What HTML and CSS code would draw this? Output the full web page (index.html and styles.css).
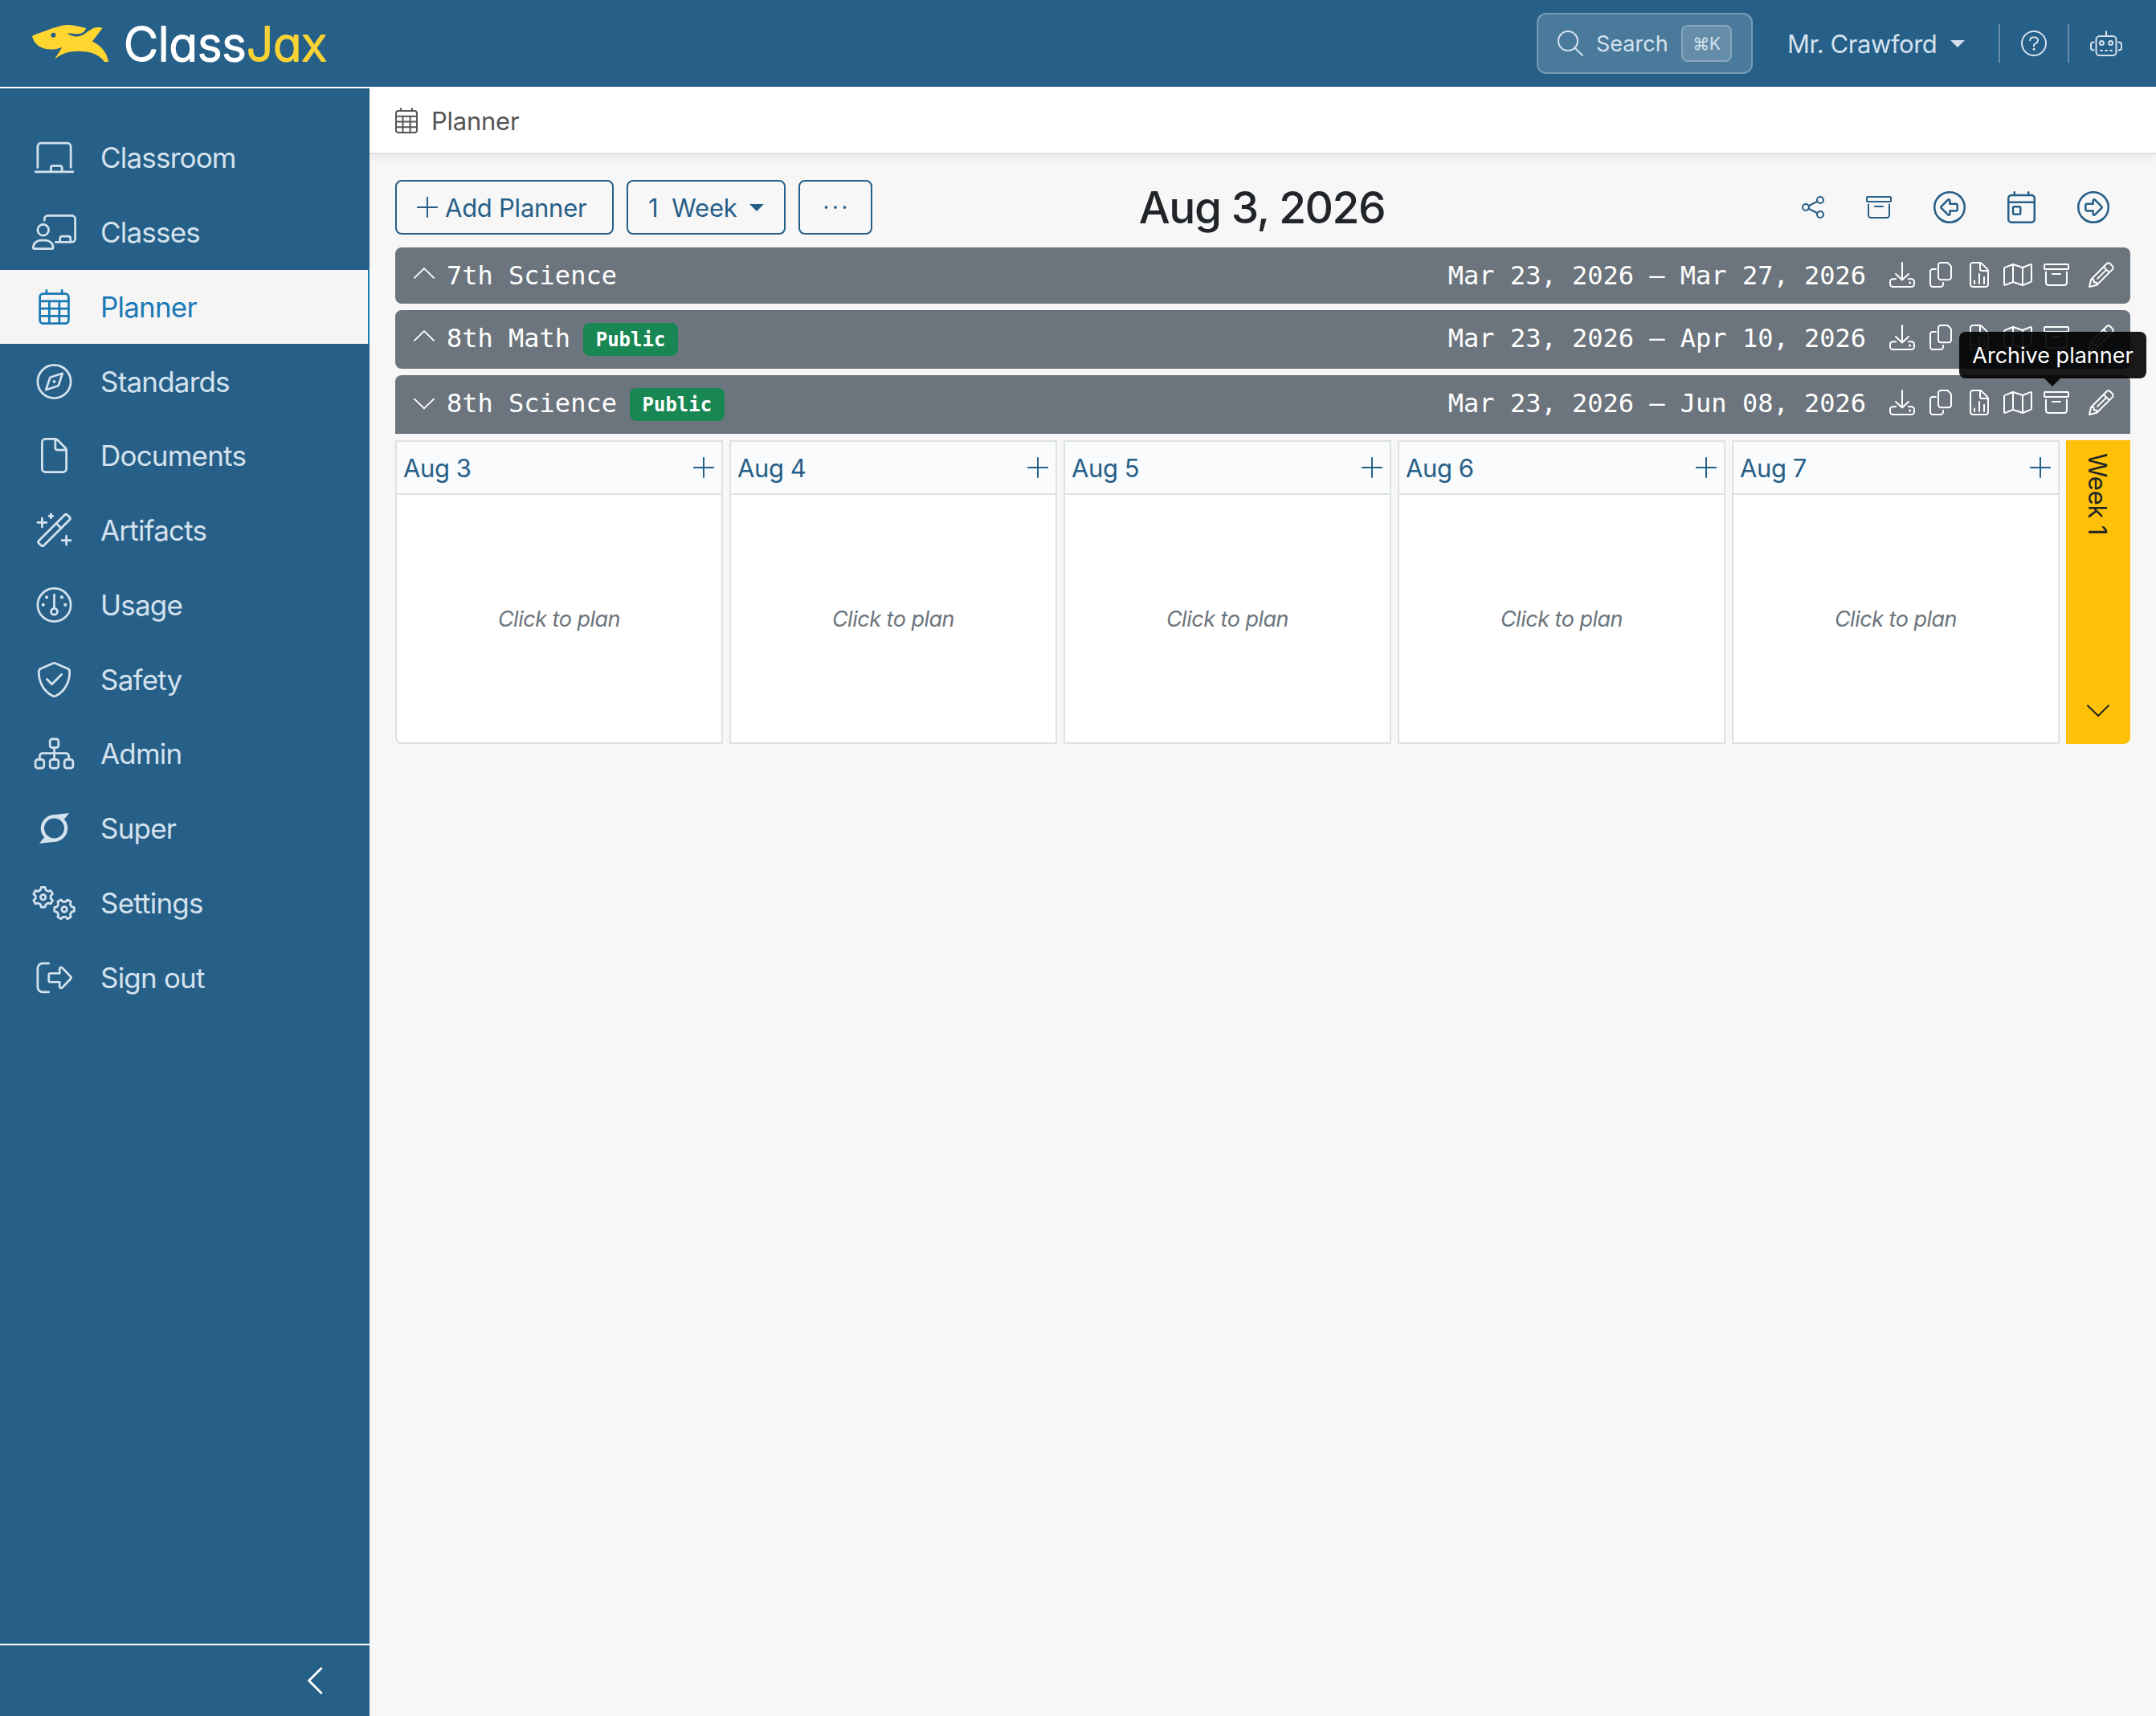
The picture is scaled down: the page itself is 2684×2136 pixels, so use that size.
FILE: index.html
```html
<!DOCTYPE html>
<html lang="en">
<head>
    <meta charset="UTF-8">
    <meta name="viewport" content="width=device-width, initial-scale=1.0">
    <title>Planner - ClassJax</title>
    <link rel="stylesheet" href="styles.css">
</head>
<body>
    <!-- Icon sprite -->
    <svg class="sprite" xmlns="http://www.w3.org/2000/svg">
        <symbol id="i-search" viewBox="0 0 512 512"><circle cx="208" cy="208" r="192"/><path d="M344 344l152 152"/></symbol>
        <symbol id="i-help" viewBox="0 0 512 512"><circle cx="256" cy="256" r="240"/><path d="M180 196c0-36 26-60 58-60h38c34 0 60 26 60 60 0 26-14 44-36 56l-28 16c-10 6-16 14-16 26v18"/><circle class="dot" cx="256" cy="370" r="24"/></symbol>
        <symbol id="i-robot" viewBox="0 0 640 512"><path d="M320 16v96M72 232c-36 0-56 18-56 44v72c0 26 20 44 56 44M568 232c36 0 56 18 56 44v72c0 26-20 44-56 44M208 400h32M304 400h32M400 400h32"/><rect x="120" y="112" width="400" height="384" rx="68"/><circle cx="230" cy="246" r="40"/><circle cx="410" cy="246" r="40"/></symbol>
        <symbol id="i-classroom" viewBox="0 0 576 512"><path d="M48 400V96c0-26 22-48 48-48h384c26 0 48 22 48 48v304M16 464h544M240 464v-56c0-18 14-32 32-32h96c18 0 32 14 32 32v56"/></symbol>
        <symbol id="i-classes" viewBox="0 0 640 512"><path d="M178 84V64c0-26 22-48 48-48h350c26 0 48 22 48 48v288c0 26-22 48-48 48H340M404 400v-52c0-18 14-32 32-32h88c18 0 32 14 32 32v52"/><circle cx="160" cy="224" r="80"/><path d="M16 480c0-61 50-107 112-107h64c62 0 112 46 112 107 0 9-7 16-16 16H32c-9 0-16-7-16-16z"/></symbol>
        <symbol id="i-calendar" viewBox="0 0 448 512"><rect x="16" y="64" width="416" height="432" rx="48"/><path d="M112 16v48M336 16v48M16 172h416M16 280h416M16 388h416M152 172v324M298 172v324"/></symbol>
        <symbol id="i-compass" viewBox="0 0 512 512"><circle cx="256" cy="256" r="240"/><path d="M376 136l-170 56c-7 2-12 7-14 14l-56 170 170-56c7-2 12-7 14-14z"/><circle class="dot" cx="256" cy="256" r="22"/></symbol>
        <symbol id="i-file" viewBox="0 0 384 512"><path d="M16 64c0-26 22-48 48-48h140c13 0 25 5 34 14l116 116c9 9 14 21 14 34v268c0 26-22 48-48 48H64c-26 0-48-22-48-48zM208 20v124c0 18 14 32 32 32h124"/></symbol>
        <symbol id="i-wand" viewBox="0 0 512 512"><g transform="translate(256 256) rotate(-45)"><rect x="-290" y="-50" width="580" height="100" rx="26"/><path d="M92-50v100"/></g><path d="M80 80v128M16 144h128M208 22v56M180 50h56M432 340v128M368 404h128"/></symbol>
        <symbol id="i-gauge" viewBox="0 0 512 512"><circle cx="256" cy="256" r="240"/><path d="M256 106v200"/><circle cx="256" cy="352" r="46"/><circle class="dot" cx="146" cy="144" r="24"/><circle class="dot" cx="366" cy="144" r="24"/><circle class="dot" cx="96" cy="254" r="24"/><circle class="dot" cx="416" cy="254" r="24"/></symbol>
        <symbol id="i-shield" viewBox="0 0 512 512"><path d="M268 18l182 77c20 8 30 26 30 48-1 122-50 272-196 346-18 9-38 9-56 0C82 415 33 265 32 143c0-22 10-40 30-48l182-77c8-3 16-3 24 0zM152 250l70 72 140-142"/></symbol>
        <symbol id="i-sitemap" viewBox="0 0 576 512"><rect x="226" y="46" width="124" height="124" rx="34"/><rect x="16" y="342" width="124" height="124" rx="34"/><rect x="226" y="342" width="124" height="124" rx="34"/><rect x="436" y="342" width="124" height="124" rx="34"/><path d="M288 170v172M78 342v-48c0-24 18-42 42-42h336c24 0 42 18 42 42v48"/></symbol>
        <symbol id="i-super" viewBox="0 0 448 512"><circle cx="224" cy="256" r="170" stroke-width="50"/><path class="dot" d="M160 76c20-10 40-14 62-16L442 34l-84 104-60-42zM288 436c-20 10-40 14-62 16L6 478l84-104 60 42z"/></symbol>
        <symbol id="i-gears" viewBox="0 0 640 512">
            <g transform="translate(159 172)"><path d="M-28-143H28L38-105 72-86 110-96 138-47 110-20V19L138 47 110 96 72 85 39 105 28 143H-28L-38 105-72 86-110 96-138 47-110 20V-19L-138-47-110-96-72-85-39-105z"/><circle r="38"/></g>
            <g transform="translate(466 348) rotate(30)"><path d="M-28-143H28L38-105 72-86 110-96 138-47 110-20V19L138 47 110 96 72 85 39 105 28 143H-28L-38 105-72 86-110 96-138 47-110 20V-19L-138-47-110-96-72-85-39-105z"/><circle r="38"/></g>
        </symbol>
        <symbol id="i-signout" viewBox="0 0 512 512"><path d="M176 48H88c-40 0-72 32-72 72v272c0 40 32 72 72 72h88M178 216c0-12 10-22 22-22h134v-66c0-20 24-30 38-16l118 124c11 12 11 28 0 40L372 400c-14 14-38 4-38-16v-66H200c-12 0-22-10-22-22z"/></symbol>
        <symbol id="i-plus" viewBox="0 0 448 448"><path d="M224 16v416M16 224h416"/></symbol>
        <symbol id="i-dots" viewBox="0 0 448 512"><circle class="dot" cx="40" cy="256" r="30"/><circle class="dot" cx="224" cy="256" r="30"/><circle class="dot" cx="408" cy="256" r="30"/></symbol>
        <symbol id="i-up" viewBox="0 0 448 512"><path d="M16 324l208-204 208 204"/></symbol>
        <symbol id="i-down" viewBox="0 0 448 512"><path d="M16 180l208 204 208-204"/></symbol>
        <symbol id="i-left" viewBox="0 0 320 512"><path d="M272 24L40 256l232 232"/></symbol>
        <symbol id="i-share" viewBox="0 0 448 512"><circle cx="80" cy="256" r="64"/><circle cx="368" cy="112" r="64"/><circle cx="368" cy="400" r="64"/><path d="M137 228l174-88M137 284l174 88"/></symbol>
        <symbol id="i-archive" viewBox="0 0 512 512"><rect x="16" y="48" width="480" height="96" rx="18"/><path d="M48 200v216c0 26 22 48 48 48h320c26 0 48-22 48-48V200M176 240h160"/></symbol>
        <symbol id="i-circle-left" viewBox="0 0 512 512"><circle cx="256" cy="256" r="240"/><path d="M124 244l108-108c10-10 28-3 28 11v53h96c13 0 24 11 24 24v64c0 13-11 24-24 24h-96v53c0 14-18 21-28 11L124 268c-7-7-7-17 0-24z"/></symbol>
        <symbol id="i-circle-right" viewBox="0 0 512 512"><circle cx="256" cy="256" r="240"/><path d="M388 244L280 136c-10-10-28-3-28 11v53h-96c-13 0-24 11-24 24v64c0 13 11 24 24 24h96v53c0 14 18 21 28 11l108-108c7-7 7-17 0-24z"/></symbol>
        <symbol id="i-day" viewBox="0 0 448 512"><rect x="16" y="64" width="416" height="432" rx="48"/><path d="M112 16v48M336 16v48M16 176h416"/><rect x="90" y="246" width="118" height="122" rx="18"/></symbol>
        <symbol id="i-download" viewBox="0 0 512 512"><path d="M256 16v336M128 240l128 120 128-120M132 340H72c-31 0-56 25-56 56v44c0 31 25 56 56 56h368c31 0 56-25 56-56v-44c0-31-25-56-56-56h-60"/><circle class="dot" cx="410" cy="416" r="24"/></symbol>
        <symbol id="i-copy" viewBox="0 0 448 512"><path d="M224 16h124c8 0 16 3 22 9l53 53c6 6 9 14 9 22v208c0 26-22 48-48 48H224c-26 0-48-22-48-48V64c0-26 22-48 48-48zM128 144H64c-26 0-48 22-48 48v256c0 26 22 48 48 48h160c26 0 48-22 48-48v-32"/></symbol>
        <symbol id="i-chart" viewBox="0 0 384 512"><path d="M16 64c0-26 22-48 48-48h140c13 0 25 5 34 14l116 116c9 9 14 21 14 34v268c0 26-22 48-48 48H64c-26 0-48-22-48-48zM208 20v124c0 18 14 32 32 32h124M96 432v-56M192 432V240M288 432V304"/></symbol>
        <symbol id="i-map" viewBox="0 0 576 512"><path d="M16 137c0-12 8-22 18-26L192 48l192 64 156-62c10-4 20 3 20 14v311c0 13-8 22-20 26L384 464 192 400 36 462c-10 4-20-3-20-14zM192 48v352M384 112v352"/></symbol>
        <symbol id="i-pencil" viewBox="0 0 512 512"><path d="M16 496l32-136c2-8 6-15 12-21L362 36c19-19 49-19 68 0l46 46c19 19 19 49 0 68L173 452c-6 6-13 10-21 12zM300 98l114 114M58 344l48 14v48h48l14 48M338 174L178 334"/></symbol>
    </svg>

    <header class="topbar">
        <a class="brand">
            <svg class="brand-logo" viewBox="0 0 196 94" preserveAspectRatio="none" role="img" aria-label="ClassJax">
                <path class="fish" d="M0 28C14 22 28 18 40 13 62 4 82 0 92 0c16 0 30 5 45 8-3 9-10 14-20 15-10 0-19-3-28-1 14 9 30 10 42 2 14-9 23-18 34-18 5 0 10 0 14 2-9 11-17 22-26 34 21 10 38 28 41 52h-10C168 72 142 67 118 67c-24 0-44 6-60 20l2-4 16-26C40 70 6 58 0 28z"/>
                <circle class="fish-eye" cx="54" cy="26" r="6"/>
            </svg>
            <svg class="brand-name" viewBox="0 0 270 90"><text x="2" y="67"><tspan>Class</tspan><tspan class="brand-jax">Jax</tspan></text></svg>
        </a>
        <div class="topbar-right">
            <button class="search-btn">
                <svg class="icon"><use href="#i-search"/></svg>
                <span class="search-label">Search</span>
                <kbd>⌘K</kbd>
            </button>
            <a class="user-menu"><span class="user-name">Mr. Crawford</span> <i class="caret"></i></a>
            <a class="topbar-icon"><svg class="icon"><use href="#i-help"/></svg></a>
            <a class="topbar-icon"><svg class="icon icon-robot"><use href="#i-robot"/></svg></a>
        </div>
    </header>

    <div class="layout">
        <aside class="sidebar">
            <nav class="menu">
                <a class="menu-item"><svg class="icon"><use href="#i-classroom"/></svg><span>Classroom</span></a>
                <a class="menu-item"><svg class="icon"><use href="#i-classes"/></svg><span>Classes</span></a>
                <a class="menu-item active"><svg class="icon"><use href="#i-calendar"/></svg><span>Planner</span></a>
                <a class="menu-item"><svg class="icon"><use href="#i-compass"/></svg><span>Standards</span></a>
                <a class="menu-item"><svg class="icon"><use href="#i-file"/></svg><span>Documents</span></a>
                <a class="menu-item"><svg class="icon"><use href="#i-wand"/></svg><span>Artifacts</span></a>
                <a class="menu-item"><svg class="icon"><use href="#i-gauge"/></svg><span>Usage</span></a>
                <a class="menu-item"><svg class="icon"><use href="#i-shield"/></svg><span>Safety</span></a>
                <a class="menu-item"><svg class="icon"><use href="#i-sitemap"/></svg><span>Admin</span></a>
                <a class="menu-item"><svg class="icon"><use href="#i-super"/></svg><span>Super</span></a>
                <a class="menu-item"><svg class="icon"><use href="#i-gears"/></svg><span>Settings</span></a>
                <a class="menu-item"><svg class="icon"><use href="#i-signout"/></svg><span>Sign out</span></a>
            </nav>
            <div class="collapse"><svg class="icon"><use href="#i-left"/></svg></div>
        </aside>

        <main class="content">
            <div class="breadcrumb"><svg class="icon"><use href="#i-calendar"/></svg><span>Planner</span></div>

            <div class="toolbar">
                <div class="toolbar-left">
                    <button class="btn btn-add"><svg class="icon"><use href="#i-plus"/></svg><span>Add Planner</span></button>
                    <button class="btn btn-week"><span class="week-count">1</span><span>Week</span><i class="caret"></i></button>
                    <button class="btn btn-more"><svg class="icon"><use href="#i-dots"/></svg></button>
                </div>
                <h1 class="title">Aug 3, 2026</h1>
                <div class="toolbar-right">
                    <svg class="icon icon-share"><use href="#i-share"/></svg>
                    <svg class="icon icon-archive"><use href="#i-archive"/></svg>
                    <svg class="icon"><use href="#i-circle-left"/></svg>
                    <svg class="icon icon-day"><use href="#i-day"/></svg>
                    <svg class="icon"><use href="#i-circle-right"/></svg>
                </div>
            </div>

            <div class="planners">
                <div class="planner">
                    <svg class="icon chevron"><use href="#i-up"/></svg>
                    <span class="planner-name">7th Science</span>
                    <span class="dates">Mar 23, 2026 – Mar 27, 2026</span>
                    <div class="actions">
                        <svg class="icon"><use href="#i-download"/></svg>
                        <svg class="icon"><use href="#i-copy"/></svg>
                        <svg class="icon"><use href="#i-chart"/></svg>
                        <svg class="icon"><use href="#i-map"/></svg>
                        <svg class="icon"><use href="#i-archive"/></svg>
                        <svg class="icon edit"><use href="#i-pencil"/></svg>
                    </div>
                </div>
                <div class="planner tall">
                    <svg class="icon chevron"><use href="#i-up"/></svg>
                    <span class="planner-name">8th Math</span>
                    <span class="badge">Public</span>
                    <span class="dates">Mar 23, 2026 – Apr 10, 2026</span>
                    <div class="actions">
                        <svg class="icon"><use href="#i-download"/></svg>
                        <svg class="icon"><use href="#i-copy"/></svg>
                        <svg class="icon"><use href="#i-chart"/></svg>
                        <svg class="icon"><use href="#i-map"/></svg>
                        <svg class="icon"><use href="#i-archive"/></svg>
                        <svg class="icon edit"><use href="#i-pencil"/></svg>
                    </div>
                </div>
                <div class="planner tall open">
                    <svg class="icon chevron"><use href="#i-down"/></svg>
                    <span class="planner-name">8th Science</span>
                    <span class="badge">Public</span>
                    <span class="dates">Mar 23, 2026 – Jun 08, 2026</span>
                    <div class="actions">
                        <svg class="icon"><use href="#i-download"/></svg>
                        <svg class="icon"><use href="#i-copy"/></svg>
                        <svg class="icon"><use href="#i-chart"/></svg>
                        <svg class="icon"><use href="#i-map"/></svg>
                        <svg class="icon"><use href="#i-archive"/></svg>
                        <svg class="icon edit"><use href="#i-pencil"/></svg>
                    </div>
                    <div class="tooltip">Archive planner</div>
                </div>

                <div class="week">
                    <div class="day">
                        <div class="day-header"><span>Aug 3</span><svg class="icon"><use href="#i-plus"/></svg></div>
                        <div class="day-body"><em>Click to plan</em></div>
                    </div>
                    <div class="day">
                        <div class="day-header"><span>Aug 4</span><svg class="icon"><use href="#i-plus"/></svg></div>
                        <div class="day-body"><em>Click to plan</em></div>
                    </div>
                    <div class="day">
                        <div class="day-header"><span>Aug 5</span><svg class="icon"><use href="#i-plus"/></svg></div>
                        <div class="day-body"><em>Click to plan</em></div>
                    </div>
                    <div class="day">
                        <div class="day-header"><span>Aug 6</span><svg class="icon"><use href="#i-plus"/></svg></div>
                        <div class="day-body"><em>Click to plan</em></div>
                    </div>
                    <div class="day">
                        <div class="day-header"><span>Aug 7</span><svg class="icon"><use href="#i-plus"/></svg></div>
                        <div class="day-body"><em>Click to plan</em></div>
                    </div>
                    <div class="week-tab">
                        <span class="week-label">Week 1</span>
                        <svg class="icon"><use href="#i-down"/></svg>
                    </div>
                </div>
            </div>
        </main>
    </div>
</body>
</html>
```
FILE: styles.css
```css
* {
    box-sizing: border-box;
}
body {
    margin: 0;
    height: 2136px;
    overflow: hidden;
    display: flex;
    flex-direction: column;
    font-family: Inter, "Liberation Sans", sans-serif;
    font-size: 31px;
    letter-spacing: -0.25px;
    color: #212529;
    background: #f7f7f7;
}
.sprite {
    display: none;
}
.icon {
    width: 32px;
    height: 32px;
    flex: none;
    fill: none;
    stroke: currentColor;
    stroke-width: 32;
    stroke-linecap: round;
    stroke-linejoin: round;
}
.dot {
    fill: currentColor;
    stroke: none;
}
.caret {
    border-left: 9px solid transparent;
    border-right: 9px solid transparent;
    border-top: 9px solid currentColor;
}
button {
    font: inherit;
    letter-spacing: inherit;
    color: inherit;
    background: none;
}

/* Top bar */
.topbar {
    height: 108px;
    flex: none;
    display: flex;
    align-items: center;
    justify-content: space-between;
    padding: 0 42px 0 40px;
    background: #265f87;
    color: #d4e2ee;
}
.brand {
    display: flex;
    align-items: center;
    gap: 16px;
}
.brand-logo {
    width: 96px;
    height: 46px;
}
.fish {
    fill: #ffd530;
}
.fish-eye {
    fill: #265f87;
}
.brand-name {
    width: 270px;
    height: 90px;
}
.brand-name text {
    font-size: 59px;
    font-weight: 300;
    letter-spacing: -0.1px;
    font-feature-settings: "cv11";
    fill: #fff;
    stroke: #fff;
    stroke-width: 2;
    stroke-linejoin: round;
}
.brand-name .brand-jax {
    fill: #f9d235;
    stroke: #f9d235;
}
.topbar-right {
    display: flex;
    align-items: center;
}
.search-btn {
    display: flex;
    align-items: center;
    width: 269px;
    height: 76px;
    padding: 0 24px;
    border: 2px solid rgba(255, 255, 255, 0.25);
    border-radius: 12px;
    background: rgba(255, 255, 255, 0.17);
}
.search-label {
    margin-left: 16px;
    font-size: 27px;
    letter-spacing: 0;
}
.search-btn kbd {
    display: flex;
    align-items: center;
    justify-content: center;
    width: 63px;
    height: 46px;
    margin-left: auto;
    border: 2px solid rgba(255, 255, 255, 0.22);
    border-radius: 8px;
    background: rgba(255, 255, 255, 0.15);
    font-family: Inter, "DejaVu Sans", sans-serif;
    font-size: 21px;
}
.user-menu {
    display: flex;
    align-items: center;
    justify-content: space-between;
    width: 221px;
    margin: 0 42px 0 43px;
    letter-spacing: -0.45px;
}
.topbar-icon {
    display: flex;
    align-items: center;
    height: 48px;
    padding: 0 26px;
    border-left: 2px solid rgba(255, 255, 255, 0.3);
}
.topbar-icon:last-child {
    padding-right: 0;
}
.icon-robot {
    width: 40px;
}

/* Sidebar */
.layout {
    display: flex;
    flex: 1;
}
.sidebar {
    width: 460px;
    display: flex;
    flex-direction: column;
    justify-content: space-between;
    background: #265f87;
    color: #d4e2ee;
    border-top: 2px solid #fff;
}
.menu {
    padding-top: 40px;
}
.menu-item {
    display: flex;
    align-items: center;
    height: 92.75px;
    padding-left: 40px;
    font-size: 35px;
    letter-spacing: -0.8px;
}
.menu-item .icon {
    width: 55px;
    height: 44px;
    margin-right: 30px;
}
.menu-item.active {
    background: #f5f5f6;
    color: #1a7ab5;
    border-right: 2px solid #1a7ab5;
}
.collapse {
    display: flex;
    align-items: center;
    justify-content: flex-end;
    height: 90px;
    padding-right: 57px;
    border-top: 2px solid #fff;
    color: #fff;
}
.collapse .icon {
    width: 21px;
    height: 34px;
    stroke-width: 44;
}

/* Content */
.content {
    flex: 1;
}
.breadcrumb {
    display: flex;
    align-items: center;
    height: 84px;
    padding: 2px 32px 0;
    background: #fff;
    border-bottom: 2px solid #dee0e2;
    box-shadow: 0 4px 10px rgba(0, 0, 0, 0.07);
    color: #555;
}
.breadcrumb .icon {
    width: 28px;
    margin: 0 17px 0 0;
}
.toolbar {
    display: grid;
    grid-template-columns: 1fr auto 1fr;
    align-items: center;
    padding: 32px 32px 16px;
    color: #265f87;
}
.toolbar-left {
    display: flex;
    gap: 16px;
}
.btn {
    display: flex;
    align-items: center;
    height: 68px;
    padding: 0 25px;
    border: 2px solid #265f87;
    border-radius: 8px;
}
.btn-add {
    width: 272px;
}
.btn-add .icon {
    width: 26px;
    height: 26px;
    margin-right: 9px;
    stroke-width: 34;
}
.btn-week {
    width: 198px;
}
.week-count {
    margin-right: 17px;
}
.btn-week .caret {
    margin-left: auto;
}
.btn-more {
    width: 92px;
    justify-content: center;
}
.btn-more .icon {
    width: 28px;
}
.title {
    margin: 0;
    padding-right: 2px;
    font-size: 55px;
    line-height: 64px;
    font-weight: 550;
    letter-spacing: -1.5px;
    color: #212529;
}
.toolbar-right {
    display: flex;
    align-items: center;
    justify-content: flex-end;
    gap: 52px;
    padding-right: 26px;
}
.toolbar-right .icon {
    width: 40px;
    height: 40px;
}
.toolbar-right .icon-day {
    width: 35px;
}
.toolbar-right .icon-archive {
    width: 32px;
    height: 32px;
}
.toolbar-right .icon-share {
    width: 28px;
    height: 32px;
}

/* Planner rows */
.planners {
    padding: 0 32px;
    display: flex;
    flex-direction: column;
    gap: 8px;
}
.planner {
    position: relative;
    display: flex;
    align-items: center;
    height: 70px;
    padding: 0 16px 0 23px;
    border-radius: 8px;
    background: #6c757d;
    color: #fff;
    font-family: "DejaVu Sans Mono", monospace;
    font-size: 32px;
    letter-spacing: 0;
}
.planner.tall {
    height: 73px;
    padding-bottom: 3px;
}
.planner.open {
    border-radius: 8px 8px 0 0;
}
.chevron {
    width: 26px;
    margin: -2px 15px 0 0;
}
.badge {
    margin: 3px 0 0 16px;
    padding: 8.4px 15.6px;
    border-radius: 8px;
    background: #198754;
    font-size: 24px;
    line-height: 24px;
    font-weight: 700;
}
.dates {
    margin-left: auto;
}
.actions {
    display: flex;
    gap: 8px;
    margin: -2px 0 0 25px;
}
.actions .icon {
    width: 40px;
}
.actions .edit {
    margin-left: 8px;
}
.tooltip {
    position: absolute;
    right: -20px;
    bottom: 69px;
    width: 233px;
    height: 58px;
    display: flex;
    align-items: center;
    justify-content: center;
    border-radius: 8px;
    background: rgba(0, 0, 0, 0.9);
    font-family: Inter, "Liberation Sans", sans-serif;
    font-size: 27px;
}
.tooltip::after {
    content: "";
    position: absolute;
    top: 58px;
    left: 106px;
    border: 10px solid transparent;
    border-bottom: none;
    border-top-color: rgba(0, 0, 0, 0.9);
}

/* Week grid */
.week {
    display: grid;
    grid-template-columns: repeat(5, 1fr) 80px;
    gap: 8px;
    height: 378px;
}
.day {
    display: flex;
    flex-direction: column;
    border: 2px solid #dee2e3;
    background: #fff;
}
.day:first-child {
    border-bottom-left-radius: 8px;
}
.day-header {
    display: flex;
    align-items: center;
    justify-content: space-between;
    height: 66px;
    padding: 0 9px 0 8px;
    border-bottom: 2px solid #dee2e3;
    background: #f9fbfd;
    color: #265f87;
    letter-spacing: -0.4px;
}
.day-header .icon {
    width: 26px;
    height: 26px;
    stroke-width: 34;
}
.day-body {
    flex: 1;
    display: flex;
    align-items: center;
    justify-content: center;
    font-size: 27px;
    letter-spacing: -0.5px;
    color: #6c757d;
}
.week-tab {
    display: flex;
    flex-direction: column;
    align-items: center;
    justify-content: space-between;
    padding: 16px 0 27px;
    border-bottom-right-radius: 8px;
    background: #ffc107;
}
.week-label {
    writing-mode: vertical-rl;
    margin-right: 2px;
    letter-spacing: -0.2px;
}
.week-tab .icon {
    width: 28px;
}
```
